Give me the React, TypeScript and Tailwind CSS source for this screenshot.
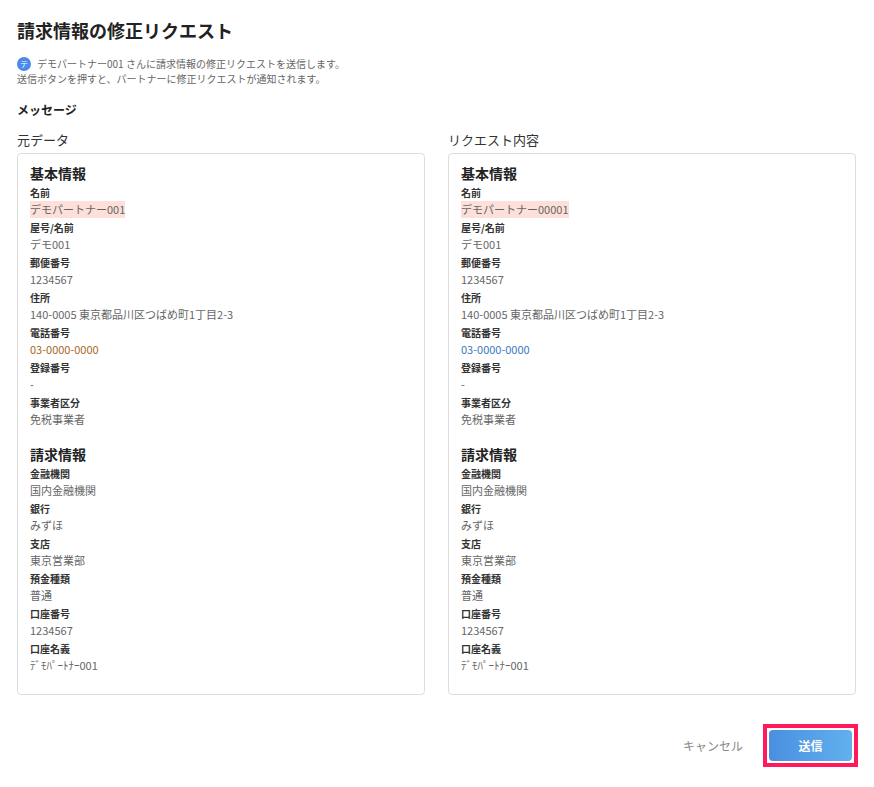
const basic = [
	["名前", "デモパートナー001", "デモパートナー00001"],
	["屋号/名前", "デモ001", "デモ001"],
	["郵便番号", "1234567", "1234567"],
	["住所", "140-0005 東京都品川区つばめ町1丁目2-3", "140-0005 東京都品川区つばめ町1丁目2-3"],
	["電話番号", "03-0000-0000", "03-0000-0000"],
	["登録番号", "-", "-"],
	["事業者区分", "免税事業者", "免税事業者"],
]
const billing = [
	["金融機関", "国内金融機関"],
	["銀行", "みずほ"],
	["支店", "東京営業部"],
	["預金種類", "普通"],
	["口座番号", "1234567"],
	["口座名義", "ﾃﾞﾓﾊﾟｰﾄﾅｰ001"],
]

const Field = (props: { label: string; value: string; highlight?: boolean; color?: string }) => (
	<div className="h-[35px] flex flex-col items-start">
		<p className="text-[10px] font-bold leading-[16px] text-[#333]">{props.label}</p>
		<p
			className={`text-[11px] leading-[17px] ${props.highlight ? "bg-[#fde0d9]" : ""} ${props.color ?? "text-[#666]"}`}
		>
			{props.value}
		</p>
	</div>
)

const Panel = (props: { title: string; side: 1 | 2 }) => (
	<div className="flex-1">
		<p className="text-[13px] text-[#333] h-[20px] mb-[3px]">{props.title}</p>
		<div className="border border-[#ddd] rounded h-[542px] pl-3 pt-[9px]">
			<p className="text-[14px] font-bold text-[#222] leading-[20px] mb-[2px]">基本情報</p>
			{basic.map((f, i) => (
				<Field
					key={i}
					label={f[0]}
					value={f[props.side]}
					highlight={i === 0}
					color={i === 4 ? (props.side === 1 ? "text-[#a8671e]" : "text-[#3b78c4]") : undefined}
				/>
			))}
			<div className="h-[14px]"></div>
			<p className="text-[14px] font-bold text-[#222] leading-[20px] mb-[2px]">請求情報</p>
			{billing.map((f, i) => (
				<Field key={i} label={f[0]} value={f[1]} />
			))}
		</div>
	</div>
)

export default function App() {
	return (
		<div
			className="w-[874px] h-[787px] bg-white px-[17px] pt-[17px]"
			style={{ fontFamily: '"Noto Sans CJK JP", "Noto Sans", sans-serif' }}
		>
			<h1 className="text-[18px] font-bold text-[#222] leading-[26px]">請求情報の修正リクエスト</h1>
			<div className="mt-[13px] text-[10px] text-[#666] leading-[15px]">
				<p className="flex items-center gap-[6px]">
					<span className="w-[14px] h-[14px] rounded-full bg-[#4a8ae8] text-white text-[8px] flex items-center justify-center">
						テ
					</span>
					デモパートナー001 さんに請求情報の修正リクエストを送信します。
				</p>
				<p>送信ボタンを押すと、パートナーに修正リクエストが通知されます。</p>
			</div>
			<p className="mt-[15px] text-[12px] font-bold text-[#222] leading-[18px]">メッセージ</p>
			<div className="mt-[11px] flex gap-[23px] w-[839px]">
				<Panel title="元データ" side={1} />
				<Panel title="リクエスト内容" side={2} />
			</div>
			<div className="mt-[29px] flex items-center justify-end gap-[20px] w-[841px]">
				<button className="text-[12px] text-[#888]">キャンセル</button>
				<div className="border-[4px] border-[#ff1a5c] p-[2px] bg-white">
					<button className="w-[83px] h-[31px] rounded bg-gradient-to-r from-[#4a8fe0] to-[#62b0ee] text-white text-[12px] font-bold">
						送信
					</button>
				</div>
			</div>
		</div>
	)
}
